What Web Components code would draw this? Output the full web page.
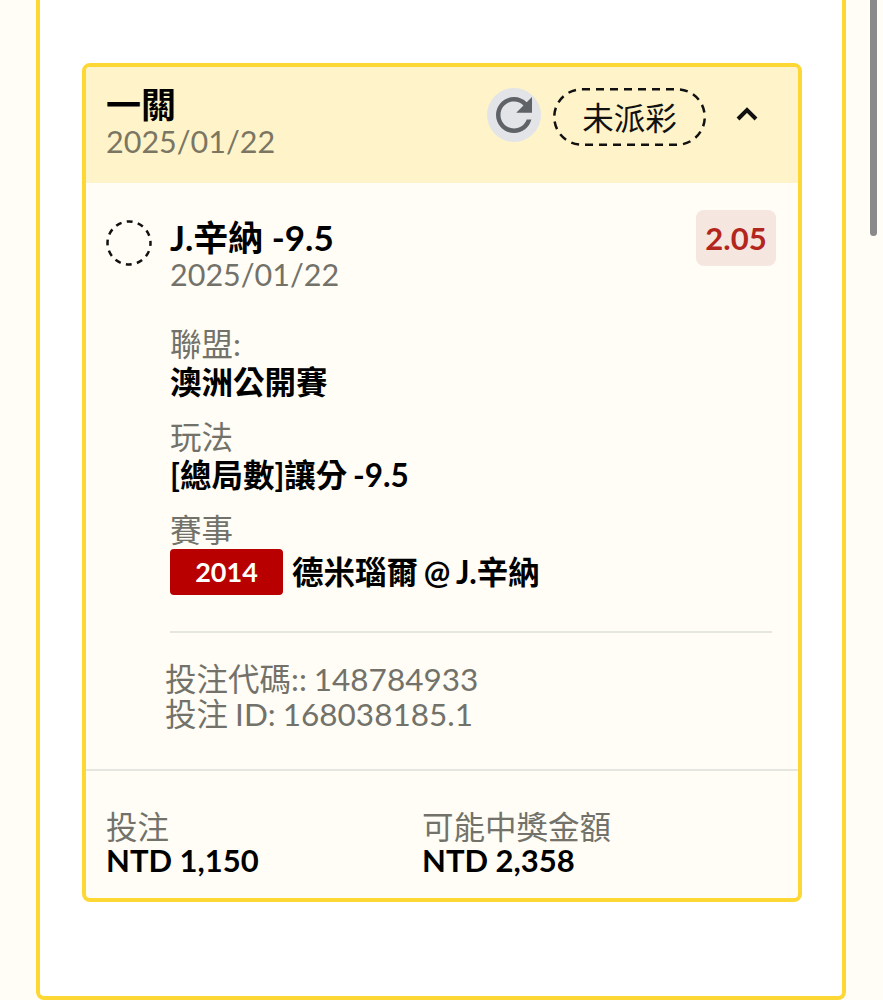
<!DOCTYPE html>
<html lang="zh-Hant">
<head>
<meta charset="utf-8">
<title>Bet slip</title>
<style>
    html, body {
        margin: 0;
        height: 1000px;
        overflow: hidden;
        background: #fffdf5;
        font-family: Lato, "Noto Sans CJK TC", sans-serif;
    }
</style>
</head>
<body>

<page-shell>
    <bet-card title="一關" date="2025/01/22" status="未派彩">
        <bet-leg pick="J.辛納 -9.5" date="2025/01/22" odds="2.05">
            <info-field label="聯盟:">澳洲公開賽</info-field>
            <info-field label="玩法">[總局數]讓分 -9.5</info-field>
            <info-field label="賽事"><match-tag slot="tag">2014</match-tag>德米瑙爾 @ J.辛納</info-field>
            <span slot="codes">投注代碼:: 148784933</span>
            <span slot="codes">投注 ID: 168038185.1</span>
        </bet-leg>
        <money-total slot="totals" label="投注">NTD 1,150</money-total>
        <money-total slot="totals" label="可能中獎金額">NTD 2,358</money-total>
    </bet-card>
</page-shell>

<script>
// < ======================================================
// < Page Shell
// < ======================================================

class PageShell extends HTMLElement {
    constructor() {
        super();
        this.attachShadow({ mode: 'open' });
        this.shadowRoot.innerHTML = /*html*/`
<style>
:host {
    display: block;
    position: relative;
    height: 1000px;
    padding-left: 36px;
    box-sizing: border-box;
}
.panel {
    width: 810px;
    height: 1000px;
    box-sizing: border-box;
    padding: 63px 0 0 42px;
    background: #fff;
    border: 4px solid #fdd835;
    border-top: 0;
    border-radius: 0 0 8px 8px;
}
.scrollbar {
    position: absolute;
    top: 0;
    left: 870px;
    width: 7px;
    height: 236px;
    background: #8a8a8a;
    border-radius: 0 0 4px 4px;
}
</style>
<div class="panel"><slot></slot></div>
<div class="scrollbar"></div>`;
    }
}

// < ======================================================
// < Bet Card
// < ======================================================

class BetCard extends HTMLElement {
    constructor() {
        super();
        this.attachShadow({ mode: 'open' });
        this.shadowRoot.innerHTML = /*html*/`
<style>
:host {
    display: block;
    width: 720px;
    height: 839px;
    box-sizing: border-box;
    border: 4px solid #fdd835;
    border-radius: 8px;
    background: #fffdf5;
    overflow: hidden;
}
.header {
    display: flex;
    align-items: flex-start;
    height: 116px;
    box-sizing: border-box;
    padding: 18px 22px 0 20px;
    background: #fff3c9;
}
.heading { flex: 1; min-width: 0; }
.title { font-size: 35px; line-height: 38px; font-weight: 700; color: #000; }
.date { font-size: 30.5px; line-height: 37px; color: #7a7663; }
.refresh {
    width: 54px;
    height: 54px;
    margin: 3px 12px 0 0;
    display: flex;
    align-items: center;
    justify-content: center;
    border-radius: 50%;
    background: #e2e4e8;
}
.refresh svg { display: block; }
.status {
    position: relative;
    width: 153px;
    height: 58px;
    margin-top: 3px;
    padding-bottom: 2px;
    box-sizing: border-box;
    display: flex;
    align-items: center;
    justify-content: center;
    font-size: 31.5px;
    color: #111;
}
.status svg { position: absolute; top: 0; left: 0; }
.chevron { margin: 21px 18px 0 30px; display: block; }
.totals {
    display: grid;
    grid-template-columns: 316px 1fr;
    padding: 40px 20px 0;
    border-top: 2px solid #e6e6e1;
}
</style>
<div class="header">
    <div class="heading">
        <div class="title"></div>
        <div class="date"></div>
    </div>
    <div class="refresh">
        <svg width="54" height="54" viewBox="0 0 24 24"><path fill="#5f6368" d="M17.65 6.35C16.2 4.9 14.21 4 12 4c-4.42 0-7.99 3.58-7.99 8s3.57 8 7.99 8c3.73 0 6.84-2.55 7.73-6h-2.08c-.82 2.33-3.04 4-5.65 4-3.31 0-6-2.69-6-6s2.69-6 6-6c1.66 0 3.14.69 4.22 1.78L13 11h7V4l-2.35 2.35z"/></svg>
    </div>
    <div class="status">
        <svg width="153" height="58" viewBox="0 0 153 58"><rect x="1.25" y="1.25" width="150.5" height="55.5" rx="27.75" fill="none" stroke="#111" stroke-width="2.5" stroke-dasharray="8 6"/></svg>
        <span class="status-text"></span>
    </div>
    <svg class="chevron" width="22" height="16" viewBox="0 0 22 16"><polyline points="2,13 11,4 20,13" fill="none" stroke="#111" stroke-width="4"/></svg>
</div>
<slot></slot>
<div class="totals"><slot name="totals"></slot></div>`;
    }

    connectedCallback() {
        this.shadowRoot.querySelector('.title').textContent = this.getAttribute('title');
        this.shadowRoot.querySelector('.date').textContent = this.getAttribute('date');
        this.shadowRoot.querySelector('.status-text').textContent = this.getAttribute('status');
    }
}

// < ======================================================
// < Bet Leg
// < ======================================================

class BetLeg extends HTMLElement {
    constructor() {
        super();
        this.attachShadow({ mode: 'open' });
        this.shadowRoot.innerHTML = /*html*/`
<style>
:host {
    display: block;
    height: 586px;
    box-sizing: border-box;
    padding: 27px 22px 0 20px;
}
.top { display: flex; align-items: flex-start; }
.marker { flex: none; margin: 10px 18px 0 0; display: block; }
.pick-block { flex: 1; min-width: 0; padding-top: 7px; }
.pick { font-size: 35px; line-height: 40px; font-weight: 700; color: #000; }
.date { font-size: 30.5px; line-height: 34px; color: #72726a; }
.odds {
    flex: none;
    width: 80px;
    height: 56px;
    display: flex;
    align-items: center;
    justify-content: center;
    background: #f5e6e0;
    border-radius: 8px;
    font-size: 31px;
    font-weight: 700;
    color: #b3261e;
}
.fields {
    display: flex;
    flex-direction: column;
    gap: 17px;
    margin: 34px 0 0 64px;
}
.divider {
    height: 2px;
    margin: 36px 4px 0 64px;
    background: #e6e6e1;
}
.codes {
    display: flex;
    flex-direction: column;
    margin: 29px 0 0 59px;
    font-size: 31.5px;
    line-height: 35px;
    word-spacing: -1px;
    color: #72726a;
}
</style>
<div class="top">
    <svg class="marker" width="46" height="46" viewBox="0 0 46 46"><circle cx="23" cy="23" r="21.5" fill="none" stroke="#111" stroke-width="2.5" stroke-dasharray="6 5.26" stroke-dashoffset="3"/></svg>
    <div class="pick-block">
        <div class="pick"></div>
        <div class="date"></div>
    </div>
    <div class="odds"></div>
</div>
<div class="fields"><slot></slot></div>
<div class="divider"></div>
<div class="codes"><slot name="codes"></slot></div>`;
    }

    connectedCallback() {
        this.shadowRoot.querySelector('.pick').textContent = this.getAttribute('pick');
        this.shadowRoot.querySelector('.date').textContent = this.getAttribute('date');
        this.shadowRoot.querySelector('.odds').textContent = this.getAttribute('odds');
    }
}

// < ======================================================
// < Small Parts
// < ======================================================

class InfoField extends HTMLElement {
    constructor() {
        super();
        this.attachShadow({ mode: 'open' });
        this.shadowRoot.innerHTML = /*html*/`
<style>
:host { display: block; font-size: 31.5px; }
.label { line-height: 38px; color: #72726a; }
.value {
    display: flex;
    align-items: center;
    gap: 9px;
    min-height: 38px;
    line-height: 38px;
    font-weight: 700;
    word-spacing: -2px;
    color: #000;
}
</style>
<div class="label"></div>
<div class="value"><slot name="tag"></slot><span><slot></slot></span></div>`;
    }

    connectedCallback() {
        this.shadowRoot.querySelector('.label').textContent = this.getAttribute('label');
    }
}

class MatchTag extends HTMLElement {
    constructor() {
        super();
        this.attachShadow({ mode: 'open' });
        this.shadowRoot.innerHTML = /*html*/`
<style>
:host {
    display: flex;
    align-items: center;
    justify-content: center;
    width: 113px;
    height: 46px;
    background: #b80000;
    border-radius: 4px;
    font-size: 27px;
    font-weight: 700;
    color: #fff;
}
</style>
<slot></slot>`;
    }
}

class MoneyTotal extends HTMLElement {
    constructor() {
        super();
        this.attachShadow({ mode: 'open' });
        this.shadowRoot.innerHTML = /*html*/`
<style>
:host { display: block; font-size: 31.5px; }
.label { line-height: 33px; color: #72726a; }
.value { font-size: 31px; line-height: 33px; font-weight: 700; color: #000; }
</style>
<div class="label"></div>
<div class="value"><slot></slot></div>`;
    }

    connectedCallback() {
        this.shadowRoot.querySelector('.label').textContent = this.getAttribute('label');
    }
}

// * ======================================================
// * Custom Element Registration
// * ======================================================

customElements.define('page-shell', PageShell);
customElements.define('bet-card', BetCard);
customElements.define('bet-leg', BetLeg);
customElements.define('info-field', InfoField);
customElements.define('match-tag', MatchTag);
customElements.define('money-total', MoneyTotal);
</script>
</body>
</html>
